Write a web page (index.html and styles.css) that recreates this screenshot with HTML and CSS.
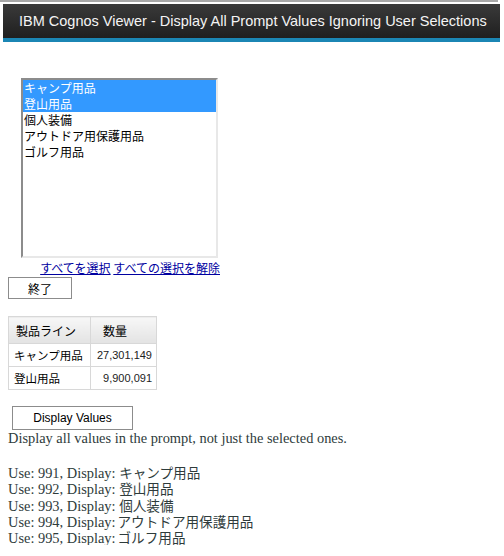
FILE: index.html
```html
<!DOCTYPE html>
<html>
<head>
<meta charset="utf-8">
<link rel="stylesheet" href="styles.css">
</head>
<body>
<div class="topline"></div>
<div class="header"><span class="title">IBM Cognos Viewer - Display All Prompt Values Ignoring User Selections</span></div>
<div class="content">
  <div class="prompt">
    <div class="listbox">
      <div class="opt sel">キャンプ用品</div>
      <div class="opt sel">登山用品</div>
      <div class="opt">個人装備</div>
      <div class="opt">アウトドア用保護用品</div>
      <div class="opt">ゴルフ用品</div>
    </div>
    <div class="links"><a href="#">すべてを選択</a> <a href="#">すべての選択を解除</a></div>
  </div>
  <button class="btn finish">終了</button>
  <table class="grid">
    <colgroup><col class="w1"><col class="w2"></colgroup>
    <tr><th>製品ライン</th><th class="c2">数量</th></tr>
    <tr><td>キャンプ用品</td><td class="num">27,301,149</td></tr>
    <tr><td>登山用品</td><td class="num">9,900,091</td></tr>
  </table>
  <button class="btn display">Display Values</button>
  <div class="desc">Display all values in the prompt, not just the selected ones.</div>
  <div class="values">
    <div>Use: 991, Display: <span class="ja">キャンプ用品</span></div>
    <div>Use: 992, Display: <span class="ja">登山用品</span></div>
    <div>Use: 993, Display: <span class="ja">個人装備</span></div>
    <div>Use: 994, Display:<span class="ja tight">アウトドア用保護用品</span></div>
    <div>Use: 995, Display:<span class="ja tight">ゴルフ用品</span></div>
  </div>
</div>
</body>
</html>
```
FILE: styles.css
```css
html, body { margin: 0; padding: 0; background: #fff; }
body { font-family: "Liberation Sans", "Noto Sans CJK JP", sans-serif; }
.topline { height: 2px; background: #a8a8a8; margin-right: 6px; }
.header {
  margin: 2px 4px 0 3px;
  height: 34px;
  background: linear-gradient(#3a3a3a, #1f1f1f);
  border-bottom: 4px solid #1b86b4;
  display: flex; align-items: center;
  padding-left: 16px;
}
.title { color: #f4f4f4; font-size: 14.5px; white-space: nowrap; }
.content { padding: 36px 0 0 8px; }
.prompt { width: 212px; display: flex; flex-direction: column; align-items: flex-end; }
.listbox {
  width: 193px; height: 176px; margin-right: 2px;
  border-top: 2px solid #8c8c8c; border-left: 2px solid #8c8c8c;
  border-right: 2px solid #e8e8e8; border-bottom: 2px solid #e8e8e8;
  font-family: "Noto Sans CJK JP", sans-serif; font-size: 12px;
  color: #000;
}
.opt { height: 16px; line-height: 16px; padding-left: 1px; white-space: nowrap; }
.opt.sel { background: #3399ff; color: #fff; }
.links { margin-top: 2px; font-family: "Noto Sans CJK JP", sans-serif; font-size: 12px; line-height: 16px; white-space: nowrap; }
.links a { color: #0000a0; }
.btn {
  display: block; background: #fff; border: 1px solid #8c8c8c; border-radius: 0;
  padding: 0; color: #000; margin: 0;
}
.finish { width: 64px; height: 22px; margin-top: 1px; font-family: "Noto Sans CJK JP", sans-serif; font-size: 12px; }
.grid {
  border-collapse: collapse; table-layout: fixed; width: 148px;
  margin-top: 17px; font-family: "Noto Sans CJK JP", sans-serif; font-size: 11.5px; color: #000;
}
.grid .w1 { width: 82px; }
.grid .w2 { width: 66px; }
.grid th, .grid td { border: 1px solid #d8d8d8; padding: 0 0 0 5px; font-weight: normal; text-align: left; white-space: nowrap; overflow: hidden; }
.grid th { height: 26px; padding-left: 7px; font-size: 12px; background: linear-gradient(#f7f7f7, #e3e3e3); }
.grid td { height: 22px; }
.grid th.c2 { padding-left: 12px; }
.grid .num { text-align: right; font-family: "Liberation Sans", sans-serif; font-size: 11px; padding: 0 4px 0 0; color: #222; }
.display { width: 121px; height: 24px; margin: 16px 0 0 4px; font-family: "Liberation Sans", sans-serif; font-size: 12px; }
.desc, .values { font-family: "Liberation Serif", "Noto Sans CJK JP", serif; font-size: 14.4px; color: #2e3b3b; }
.desc { line-height: 17px; }
.values { margin-top: 17px; line-height: 16.3px; }
.values > div { height: 16.3px; white-space: nowrap; }
.ja { display: inline-block; height: 16px; font-family: "Noto Sans CJK JP", sans-serif; font-size: 13.6px; line-height: 16px; }
.ja.tight { margin-left: 2px; }
```
